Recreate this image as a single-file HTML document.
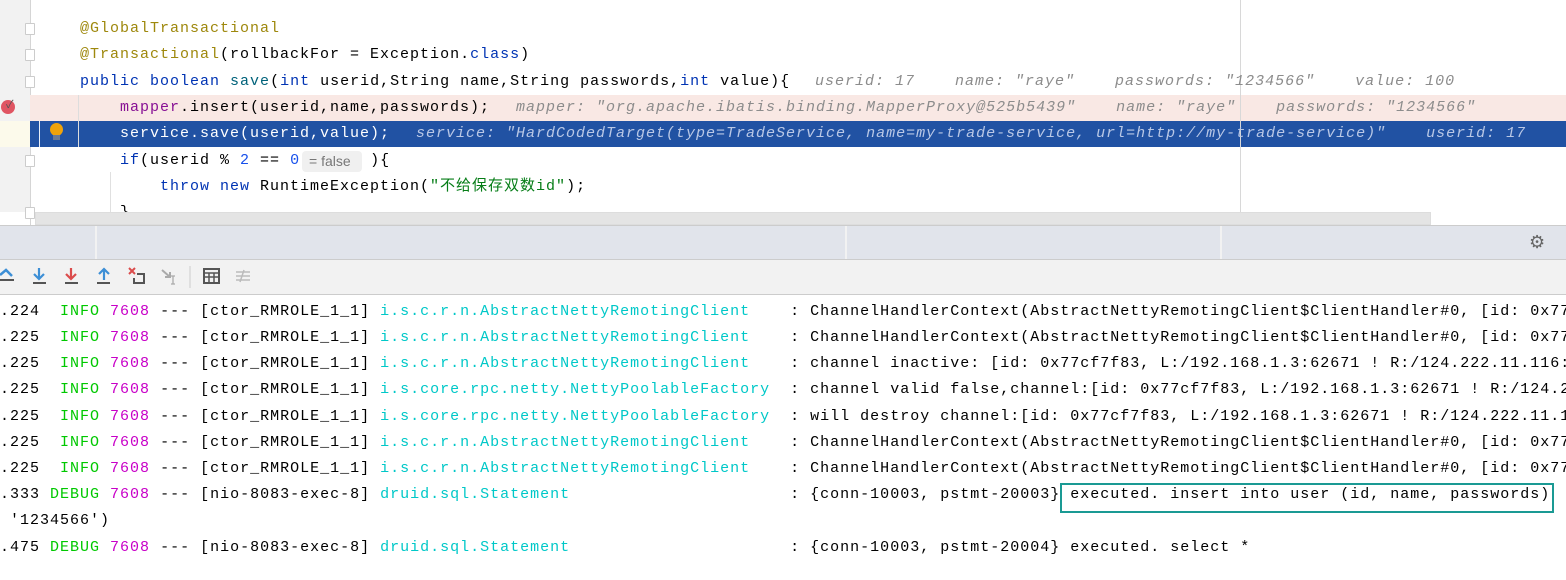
<!DOCTYPE html>
<html><head><meta charset="utf-8"><style>
*{margin:0;padding:0;box-sizing:border-box}
body{width:1566px;height:580px;overflow:hidden;background:#fff;position:relative;font-family:"Liberation Mono","Noto Sans CJK SC",monospace;font-size:15px;letter-spacing:1px}
.a{position:absolute;white-space:pre}
.ln{position:absolute;left:0;height:26px;line-height:26px;white-space:pre}
.hint{font-style:italic;color:#8c8c8c}
.kw{color:#0033b3}.an{color:#9e880d}.fn{color:#00627a}.num{color:#1750eb}.str{color:#067d17}.fld{color:#871094}
.c{color:#00c8c8}.g{color:#00c800}.m{color:#c800c8}
.fold{position:absolute;left:25px;width:10px;height:12px;border:1px solid #ccc;background:#fff;border-radius:1px}
</style></head><body>
<!-- editor -->
<div class="a" style="left:0;top:0;width:30px;height:212px;background:#f2f2f2"></div>
<div class="a" style="left:30px;top:0;width:1px;height:225px;background:#d5d5d5"></div>
<div class="a" style="left:30px;top:95px;width:1536px;height:26px;background:#f9e8e4"></div>
<div class="a" style="left:0;top:121px;width:30px;height:26px;background:#fcfaeb"></div>
<div class="a" style="left:30px;top:121px;width:1536px;height:26px;background:#2152a3"></div>
<div class="a" style="left:39px;top:121px;width:1px;height:26px;background:#e8eef8"></div>
<div class="a" style="left:78px;top:95px;width:1px;height:52px;background:#ddd"></div>
<div class="a" style="left:110px;top:172px;width:1px;height:40px;background:#e0e0e0"></div>
<div class="a" style="left:1240px;top:0;width:1px;height:225px;background:#d8d8d8"></div>
<div class="fold" style="top:23px"></div><div class="fold" style="top:49px"></div><div class="fold" style="top:76px"></div><div class="fold" style="top:155px"></div><div class="fold" style="top:207px"></div>
<div class="a" style="left:1px;top:100px;width:14px;height:14px;border-radius:50%;background:#e05563"></div>
<div class="a" style="left:6px;top:96px;font-size:11px;color:#555">✓</div>
<div class="a" style="left:50px;top:123px;width:13px;height:13px;border-radius:50%;background:#f0a30a"></div>
<div class="a" style="left:53px;top:135px;width:7px;height:5px;background:#6a7a95"></div>

<div class="ln" style="top:16px;left:80px"><span class="an">@GlobalTransactional</span></div>
<div class="ln" style="top:42px;left:80px"><span class="an">@Transactional</span>(rollbackFor = Exception.<span class="kw">class</span>)</div>
<div class="ln" style="top:69px;left:80px"><span class="kw">public boolean</span> <span class="fn">save</span>(<span class="kw">int</span> userid,String name,String passwords,<span class="kw">int</span> value){</div>
<div class="ln hint" style="top:69px;left:815px">userid: 17    name: "raye"    passwords: "1234566"    value: 100</div>
<div class="ln" style="top:95px;left:120px"><span class="fld">mapper</span>.insert(userid,name,passwords);</div>
<div class="ln hint" style="top:95px;left:516px">mapper: "org.apache.ibatis.binding.MapperProxy@525b5439"    name: "raye"    passwords: "1234566"</div>
<div class="ln" style="top:121px;left:120px;color:#fff">service.save(userid,value);</div>
<div class="ln hint" style="top:121px;left:416px;color:#b9c8e6">service: "HardCodedTarget(type=TradeService, name=my-trade-service, url=http://my-trade-service)"    userid: 17    v</div>
<div class="ln" style="top:148px;left:120px"><span class="kw">if</span>(userid % <span class="num">2</span> == <span class="num">0</span>       ){</div>
<div class="a" style="left:302px;top:151px;width:60px;height:21px;background:#f0f0f0;border-radius:4px;font-family:'Liberation Sans',sans-serif;letter-spacing:0;font-size:14px;color:#777;line-height:21px;padding-left:7px">= false</div>
<div class="ln" style="top:174px;left:160px"><span class="kw">throw new</span> RuntimeException(<span class="str">"不给保存双数id"</span>);</div>
<div class="ln" style="top:200px;left:120px">}</div>
<div class="a" style="left:35px;top:212px;width:1396px;height:13px;background:#e4e4e4;border:1px solid #ddd"></div>
<!-- tool header -->
<div class="a" style="left:0;top:225px;width:1566px;height:35px;background:#e1e4eb;border-top:1px solid #ccc;border-bottom:1px solid #ccc"></div>
<div class="a" style="left:95px;top:226px;width:2px;height:33px;background:#f2f2f2"></div>
<div class="a" style="left:845px;top:226px;width:2px;height:33px;background:#f2f2f2"></div>
<div class="a" style="left:1220px;top:226px;width:2px;height:33px;background:#f2f2f2"></div>
<div class="a" style="left:1529px;top:232px;font-size:18px;color:#666;letter-spacing:0">⚙</div>
<!-- toolbar -->
<div class="a" style="left:0;top:260px;width:1566px;height:35px;background:#f2f2f2;border-bottom:1px solid #ccc"></div>
<svg class="a" style="left:0;top:262px" width="260" height="30">
<path d="M0 13 L6 8 L12 14" stroke="#3d8fd6" stroke-width="2.5" fill="none"/><path d="M0 18 H14" stroke="#555" stroke-width="2"/>
<g stroke="#3d8fd6" stroke-width="2.2" fill="none"><path d="M39 6 V16 M34 12 L39 17 L44 12"/></g><path d="M33 21 H46" stroke="#555" stroke-width="2"/>
<g stroke="#db4c4c" stroke-width="2.2" fill="none"><path d="M71 6 V16 M66 12 L71 17 L76 12"/></g><path d="M65 21 H78" stroke="#555" stroke-width="2"/>
<g stroke="#3d8fd6" stroke-width="2.2" fill="none"><path d="M104 18 V8 M99 12 L104 7 L109 12"/></g><path d="M97 21 H110" stroke="#555" stroke-width="2"/>
<path d="M129 6 L135 12 M135 6 L129 12" stroke="#db4c4c" stroke-width="2"/><path d="M137 12 H144 V21 H134 V16" stroke="#555" stroke-width="2" fill="none"/>
<path d="M162 8 L170 15 M170 10 V15 H165" stroke="#aaa" stroke-width="2" fill="none"/><path d="M173 14 V22 M171 14 H175 M171 22 H175" stroke="#aaa" stroke-width="1.3"/>
<path d="M190 4 V26" stroke="#ccc"/>
<rect x="204" y="7" width="15" height="14" fill="none" stroke="#555" stroke-width="2"/><path d="M204 11 H219 M204 15 H219 M209 11 V21 M214 11 V21" stroke="#555" stroke-width="1.5"/>
<path d="M236 10 H250 M236 14 H250 M236 18 H250 M244 8 L240 20" stroke="#bbb" stroke-width="1.5"/>
</svg>
<!-- console -->
<div class="ln" style="top:299px"><span>.224  </span><span class="g">INFO</span> <span class="m">7608</span> --- [ctor_RMROLE_1_1] <span class="c">i.s.c.r.n.AbstractNettyRemotingClient   </span> : ChannelHandlerContext(AbstractNettyRemotingClient$ClientHandler#0, [id: 0x77</div>
<div class="ln" style="top:325px"><span>.225  </span><span class="g">INFO</span> <span class="m">7608</span> --- [ctor_RMROLE_1_1] <span class="c">i.s.c.r.n.AbstractNettyRemotingClient   </span> : ChannelHandlerContext(AbstractNettyRemotingClient$ClientHandler#0, [id: 0x77</div>
<div class="ln" style="top:351px"><span>.225  </span><span class="g">INFO</span> <span class="m">7608</span> --- [ctor_RMROLE_1_1] <span class="c">i.s.c.r.n.AbstractNettyRemotingClient   </span> : channel inactive: [id: 0x77cf7f83, L:/192.168.1.3:62671 ! R:/124.222.11.116:</div>
<div class="ln" style="top:377px"><span>.225  </span><span class="g">INFO</span> <span class="m">7608</span> --- [ctor_RMROLE_1_1] <span class="c">i.s.core.rpc.netty.NettyPoolableFactory </span> : channel valid false,channel:[id: 0x77cf7f83, L:/192.168.1.3:62671 ! R:/124.2</div>
<div class="ln" style="top:404px"><span>.225  </span><span class="g">INFO</span> <span class="m">7608</span> --- [ctor_RMROLE_1_1] <span class="c">i.s.core.rpc.netty.NettyPoolableFactory </span> : will destroy channel:[id: 0x77cf7f83, L:/192.168.1.3:62671 ! R:/124.222.11.1</div>
<div class="ln" style="top:430px"><span>.225  </span><span class="g">INFO</span> <span class="m">7608</span> --- [ctor_RMROLE_1_1] <span class="c">i.s.c.r.n.AbstractNettyRemotingClient   </span> : ChannelHandlerContext(AbstractNettyRemotingClient$ClientHandler#0, [id: 0x77</div>
<div class="ln" style="top:456px"><span>.225  </span><span class="g">INFO</span> <span class="m">7608</span> --- [ctor_RMROLE_1_1] <span class="c">i.s.c.r.n.AbstractNettyRemotingClient   </span> : ChannelHandlerContext(AbstractNettyRemotingClient$ClientHandler#0, [id: 0x77</div>
<div class="ln" style="top:482px"><span>.333 </span><span class="g">DEBUG</span> <span class="m">7608</span> --- [nio-8083-exec-8] <span class="c">druid.sql.Statement                     </span> : {conn-10003, pstmt-20003} executed. insert into user (id, name, passwords)</div>
<div class="ln" style="top:508px"> '1234566')</div>
<div class="ln" style="top:535px"><span>.475 </span><span class="g">DEBUG</span> <span class="m">7608</span> --- [nio-8083-exec-8] <span class="c">druid.sql.Statement                     </span> : {conn-10003, pstmt-20004} executed. select *</div>
<div class="a" style="left:1060px;top:483px;width:494px;height:30px;border:2px solid #1a9a94"></div>
</body></html>
